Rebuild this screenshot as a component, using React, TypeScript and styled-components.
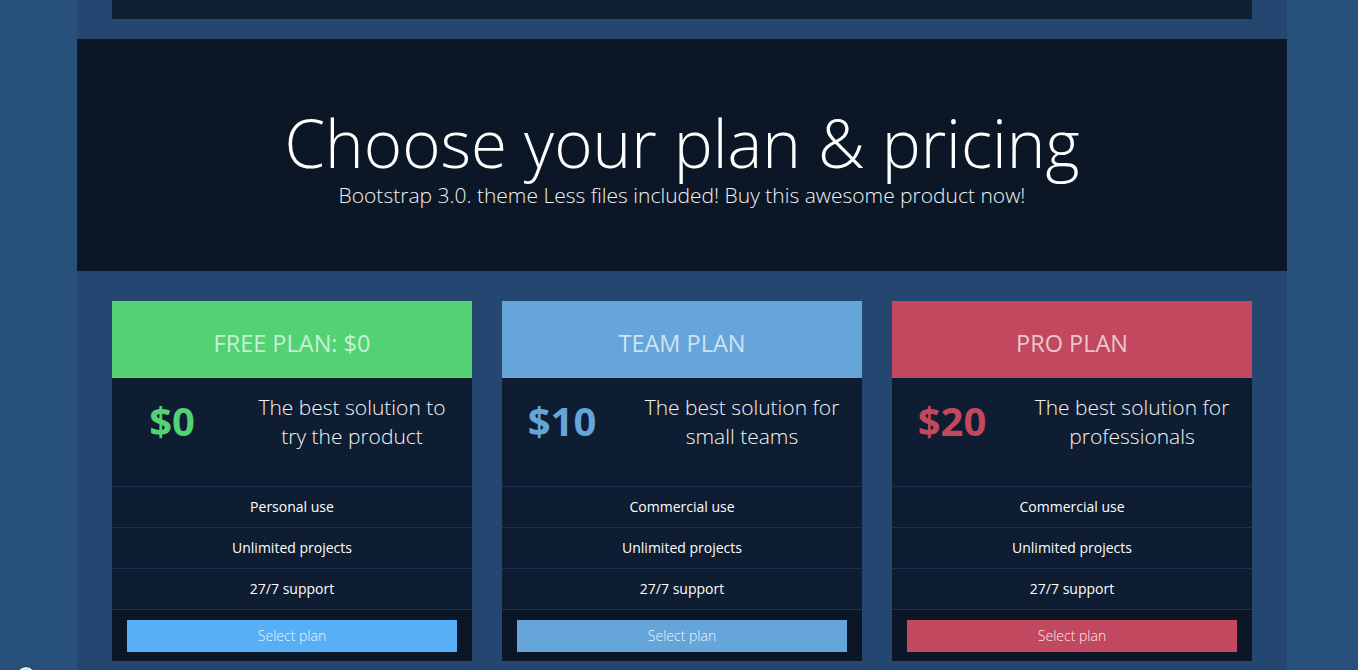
import React from "react";
import styled, { createGlobalStyle } from "styled-components";

const GlobalStyle = createGlobalStyle`
  html, body { margin: 0; padding: 0; background: #27507a; }
  body { font-family: "Open Sans", "Liberation Sans", sans-serif; color: #fff; overflow: hidden; }
  * { box-sizing: border-box; }
`;

const Page = styled.div`
  padding-left: 77px;
  width: 1358px;
  height: 670px;
  overflow: hidden;
  position: relative;
`;

const Container = styled.div`
  width: 1210px;
  background: #244670;
  display: flex;
  flex-direction: column;
  padding-bottom: 40px;
`;

const TopStrip = styled.div`
  margin: 0 35px;
  height: 19px;
  background: #0e1e33;
`;

const Hero = styled.header`
  margin-top: 20px;
  height: 232px;
  background: #0b1726;
  display: flex;
  flex-direction: column;
  align-items: center;
  padding-top: 68px;
`;

const Title = styled.h1`
  margin: 0;
  font-size: 65.5px;
  font-weight: 300;
  line-height: 1.1;
  color: #fff;
  letter-spacing: 0;
`;

const Subtitle = styled.p`
  margin: 3px 0 0;
  font-size: 21px;
  font-weight: 300;
  line-height: 1.3;
  color: #f2f2f2;
`;

const Cards = styled.section`
  margin-top: 30px;
  padding: 0 35px;
  display: grid;
  grid-template-columns: repeat(3, 360px);
  gap: 30px;
`;

const Card = styled.article`
  display: flex;
  flex-direction: column;
  background: #0e1d31;
`;

const CardHeader = styled.div<{ $color: string }>`
  height: 77px;
  background: ${(p) => p.$color};
  padding-top: 30px;
  text-align: center;
  font-size: 23.5px;
  font-weight: 400;
  line-height: 1.1;
  color: rgba(255, 255, 255, 0.7);
`;

const CardBody = styled.div`
  height: 108px;
  display: grid;
  grid-template-columns: 120px 240px;
`;

const Price = styled.div<{ $color: string }>`
  padding-top: 21px;
  text-align: center;
  font-size: 40px;
  font-weight: 700;
  line-height: 1.1;
  color: ${(p) => p.$color};
`;

const Desc = styled.p`
  margin: 0;
  padding: 15px 10px 0;
  text-align: center;
  font-size: 21px;
  font-weight: 300;
  line-height: 29px;
  color: #f4f4f4;
`;

const FeatureList = styled.ul`
  list-style: none;
  margin: 0;
  padding: 0;
`;

const Feature = styled.li`
  height: 41px;
  border-top: 1px solid #1a3252;
  display: flex;
  align-items: center;
  justify-content: center;
  padding-bottom: 2px;
  font-size: 14px;
  font-weight: 500;
  color: #fff;
`;

const CardFooter = styled.div`
  border-top: 1px solid #1a3252;
  background: #0b1726;
  padding: 10px 15px 9px;
`;

const SelectButton = styled.button<{ $color: string }>`
  display: block;
  width: 100%;
  height: 32px;
  border: none;
  padding: 0 0 2px;
  background: ${(p) => p.$color};
  color: rgba(255, 255, 255, 0.92);
  font-family: "Open Sans", "Liberation Sans", sans-serif;
  font-size: 14px;
  font-weight: 300;
  cursor: pointer;
`;

const Bubble = styled.div`
  position: absolute;
  left: 16px;
  top: 666px;
  width: 20px;
  height: 20px;
  border-radius: 50%;
  background: #dfe6ee;
  border: 1px solid #173452;
`;

type Plan = {
  title: string;
  color: string;
  button: string;
  price: string;
  desc: React.ReactNode;
  use: string;
};

const plans: Plan[] = [
  {
    title: "FREE PLAN: $0",
    color: "#52d273",
    button: "#58aff6",
    price: "$0",
    desc: (
      <>
        The best solution to
        <br />
        try the product
      </>
    ),
    use: "Personal use",
  },
  {
    title: "TEAM PLAN",
    color: "#65a5da",
    button: "#65a5da",
    price: "$10",
    desc: (
      <>
        The best solution for
        <br />
        small teams
      </>
    ),
    use: "Commercial use",
  },
  {
    title: "PRO PLAN",
    color: "#c2485f",
    button: "#c2485f",
    price: "$20",
    desc: (
      <>
        The best solution for
        <br />
        professionals
      </>
    ),
    use: "Commercial use",
  },
];

export default function App() {
  return (
    <>
      <GlobalStyle />
      <Page>
        <Container>
          <TopStrip />
          <Hero>
            <Title>Choose your plan &amp; pricing</Title>
            <Subtitle>Bootstrap 3.0. theme Less files included! Buy this awesome product now!</Subtitle>
          </Hero>
          <Cards>
            {plans.map((p) => (
              <Card key={p.title}>
                <CardHeader $color={p.color}>{p.title}</CardHeader>
                <CardBody>
                  <Price $color={p.color}>{p.price}</Price>
                  <Desc>{p.desc}</Desc>
                </CardBody>
                <FeatureList>
                  <Feature>{p.use}</Feature>
                  <Feature>Unlimited projects</Feature>
                  <Feature>27/7 support</Feature>
                </FeatureList>
                <CardFooter>
                  <SelectButton $color={p.button}>Select plan</SelectButton>
                </CardFooter>
              </Card>
            ))}
          </Cards>
        </Container>
        <Bubble />
      </Page>
    </>
  );
}
